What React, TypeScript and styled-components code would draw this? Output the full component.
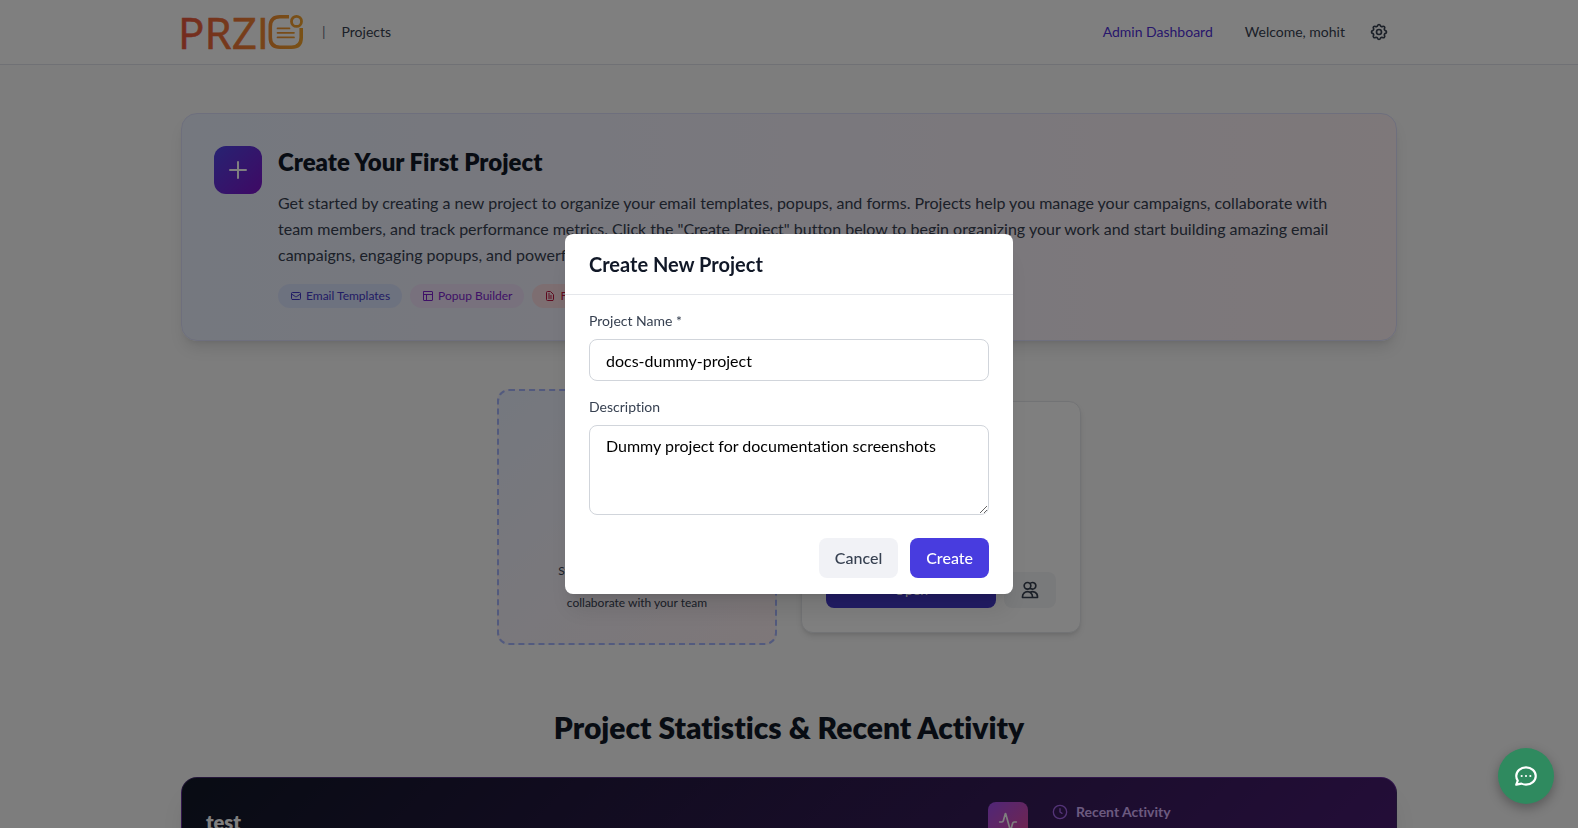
import React, { useState } from "react";
import styled, { createGlobalStyle, css } from "styled-components";

const GlobalStyle = createGlobalStyle`
  *, *::before, *::after { box-sizing: border-box; }
  body {
    margin: 0;
    overflow: hidden;
    background: #fafafa;
    color: #111827;
    font-family: Lato, "Liberation Sans", sans-serif;
    font-size: 16px;
    line-height: 24px;
    font-variant-ligatures: none;
    -webkit-font-smoothing: antialiased;
  }
  h1, h2, h3, p, ul { margin: 0; padding: 0; }
  button, input, textarea { font: inherit; }
  button { cursor: pointer; border: 0; }
  a { color: inherit; text-decoration: none; }
`;

/* ---------- icons ---------- */

const Svg = styled.svg<{ $size: number }>`
  display: block;
  flex: none;
  width: ${(p) => p.$size}px;
  height: ${(p) => p.$size}px;
  fill: none;
  stroke: currentColor;
  stroke-width: 2;
  stroke-linecap: round;
  stroke-linejoin: round;
`;

const paths = {
  gear: [
    "M10.325 4.317c.426-1.756 2.924-1.756 3.35 0a1.724 1.724 0 002.573 1.066c1.543-.94 3.31.826 2.37 2.37a1.724 1.724 0 001.065 2.572c1.756.426 1.756 2.924 0 3.35a1.724 1.724 0 00-1.066 2.573c.94 1.543-.826 3.31-2.37 2.37a1.724 1.724 0 00-2.572 1.065c-.426 1.756-2.924 1.756-3.35 0a1.724 1.724 0 00-2.573-1.066c-1.543.94-3.31-.826-2.37-2.37a1.724 1.724 0 00-1.065-2.572c-1.756-.426-1.756-2.924 0-3.35a1.724 1.724 0 001.066-2.573c-.94-1.543.826-3.31 2.37-2.37.996.608 2.296.07 2.572-1.065z",
    "M15 12a3 3 0 11-6 0 3 3 0 016 0z",
  ],
  plus: ["M12 4v16m8-8H4"],
  mail: [
    "M3 8l7.89 5.26a2 2 0 002.22 0L21 8M5 19h14a2 2 0 002-2V7a2 2 0 00-2-2H5a2 2 0 00-2 2v10a2 2 0 002 2z",
  ],
  layout: [
    "M4 3h16a1 1 0 011 1v16a1 1 0 01-1 1H4a1 1 0 01-1-1V4a1 1 0 011-1z",
    "M3 9h18M9 21V9",
  ],
  document: [
    "M9 12h6m-6 4h6m2 5H7a2 2 0 01-2-2V5a2 2 0 012-2h5.586a1 1 0 01.707.293l5.414 5.414a1 1 0 01.293.707V19a2 2 0 01-2 2z",
    "M9 8h2",
  ],
  users: [
    "M12 4.354a4 4 0 110 5.292M15 21H3v-1a6 6 0 0112 0v1zm0 0h6v-1a6 6 0 00-9-5.197M13 7a4 4 0 11-8 0 4 4 0 018 0z",
  ],
  pulse: [
    "M22 12h-2.48a2 2 0 0 0-1.93 1.46l-2.35 8.36a.25.25 0 0 1-.48 0L9.24 2.18a.25.25 0 0 0-.48 0l-2.35 8.36A2 2 0 0 1 4.49 12H2",
  ],
  clock: ["M12 7v5l3 2M22 12a10 10 0 11-20 0 10 10 0 0120 0z"],
  chat: [
    "M8 12h.01M12 12h.01M16 12h.01M21 12c0 4.418-4.03 8-9 8a9.863 9.863 0 01-4.255-.949L3 20l1.395-3.72C3.512 15.042 3 13.574 3 12c0-4.418 4.03-8 9-8s9 3.582 9 8z",
  ],
};

function Icon({ name, size }: { name: keyof typeof paths; size: number }) {
  return (
    <Svg $size={size} viewBox="0 0 24 24" aria-hidden="true">
      {paths[name].map((d) => (
        <path key={d} d={d} />
      ))}
    </Svg>
  );
}

const LogoSvg = styled.svg`
  display: block;
  overflow: visible;
  width: 124px;
  height: 40px;
  font-family: "Open Sans", sans-serif;
  font-size: 44px;
`;

function Logo() {
  return (
    <LogoSvg viewBox="0 0 124 40" role="img" aria-label="PRZIO">
      <defs>
        <linearGradient id="logoFill" gradientUnits="userSpaceOnUse" x1="0" y1="0" x2="124" y2="0">
          <stop offset="0" stopColor="#e8573f" />
          <stop offset="0.5" stopColor="#ee7a35" />
          <stop offset="1" stopColor="#f3a52c" />
        </linearGradient>
      </defs>
      <text x="-3" y="37" fill="url(#logoFill)" stroke="url(#logoFill)" strokeWidth="0.6">
        PRZI
      </text>
      <g fill="none" stroke="url(#logoFill)" strokeLinecap="round">
        <path
          strokeWidth="3.6"
          strokeLinecap="butt"
          d="M108 4.8H99Q89.300 4.800 89.300 14.500V25.500Q89.300 35.200 99 35.200H110.500Q120.200 35.200 120.200 25.500V16"
        />
        <circle cx="115.500" cy="9.400" r="5" strokeWidth="2.800" />
        <path strokeWidth="1.700" d="M96.500 16.400h12M96.500 20.800h16.500M96.500 25.400h16.500" />
      </g>
    </LogoSvg>
  );
}

/* ---------- page ---------- */

const Page = styled.div`
  height: 100vh;
  overflow: hidden;
`;

const Container = styled.div`
  width: 100%;
  max-width: 1280px;
  margin: 0 auto;
  padding: 0 32px;
`;

const Header = styled.header`
  background: #fff;
  border-bottom: 1px solid #e0e2ea;
`;

const HeaderRow = styled(Container)`
  display: flex;
  align-items: center;
  justify-content: space-between;
  height: 64px;
  font-size: 14px;
  line-height: 20px;
`;

const Brand = styled.div`
  display: flex;
  align-items: center;
  gap: 16px;
  color: #374151;
`;

const Divider = styled.span`
  color: #6b7280;
  margin-left: 1px;
`;

const Account = styled.nav`
  display: flex;
  align-items: center;
  gap: 16px;
  color: #374151;
`;

const AdminLink = styled.a`
  color: #4f2fd8;
  margin-right: 16px;
`;

const IconButton = styled.button`
  padding: 8px;
  background: transparent;
  color: #374151;
`;

const Main = styled(Container).attrs({ as: "main" })`
  padding-top: 48px;
`;

const Hero = styled.section`
  display: flex;
  gap: 16px;
  padding: 32px;
  border: 1px solid #dcdffb;
  border-radius: 16px;
  background: linear-gradient(to right, #eaf0fe, #f4f0fb 50%, #fcf0f4);
  box-shadow: 0 10px 15px -3px rgba(0, 0, 0, 0.1), 0 4px 6px -4px rgba(0, 0, 0, 0.1);
`;

const Tile = styled.div<{ $size: number; $from: string; $to: string; $radius: number }>`
  display: grid;
  place-items: center;
  flex: none;
  width: ${(p) => p.$size}px;
  height: ${(p) => p.$size}px;
  border-radius: ${(p) => p.$radius}px;
  background: linear-gradient(135deg, ${(p) => p.$from}, ${(p) => p.$to});
  color: #fff;
`;

const HeroTitle = styled.h1`
  font-size: 24px;
  line-height: 32px;
  font-weight: 800;
`;

const HeroText = styled.p`
  margin-top: 12px;
  line-height: 26px;
  color: #374151;
`;

const Chips = styled.ul`
  display: flex;
  flex-wrap: wrap;
  gap: 8px;
  margin-top: 16px;
  list-style: none;
`;

const Chip = styled.li<{ $bg: string; $fg: string }>`
  display: flex;
  align-items: center;
  gap: 4px;
  padding: 4px 12px;
  border-radius: 12px;
  background: ${(p) => p.$bg};
  color: ${(p) => p.$fg};
  font-size: 12px;
  line-height: 16px;
`;

const Cards = styled.section`
  display: flex;
  flex-wrap: wrap;
  align-items: center;
  justify-content: center;
  gap: 24px;
  margin: 48px 0 64px;
`;

const NewCard = styled.div`
  display: flex;
  flex-direction: column;
  align-items: center;
  justify-content: flex-end;
  width: 280px;
  min-height: 256px;
  padding: 32px;
  border: 2px dashed #a5b4fc;
  border-radius: 12px;
  background: linear-gradient(135deg, #eaf0fe, #f4f0f8 50%, #fceff2);
  color: #374151;
  font-size: 12px;
  line-height: 16px;
  text-align: center;
`;

const ProjectCard = styled.article`
  display: flex;
  align-items: flex-end;
  gap: 8px;
  width: 280px;
  min-height: 232px;
  padding: 24px;
  border: 1px solid #e5e7eb;
  border-radius: 12px;
  background: #fff;
  box-shadow: 0 4px 6px -1px rgba(0, 0, 0, 0.1), 0 2px 4px -2px rgba(0, 0, 0, 0.1);
`;

const cardButton = css`
  height: 36px;
  border-radius: 8px;
  font-size: 14px;
  line-height: 20px;
`;

const OpenButton = styled.button`
  ${cardButton}
  flex: 1;
  padding: 8px 16px;
  background: #4338ca;
  color: #fff;
`;

const TeamButton = styled.button`
  ${cardButton}
  padding: 8px 16px;
  background: #f3f4f6;
  color: #374151;
`;

const SectionTitle = styled.h2`
  margin-bottom: 32px;
  font-size: 30px;
  line-height: 36px;
  font-weight: 800;
  text-align: center;
`;

const Stats = styled.section`
  display: flex;
  gap: 24px;
  min-height: 300px;
  padding: 24px;
  border: 1px solid rgba(168, 85, 247, 0.3);
  border-radius: 16px;
  background: linear-gradient(135deg, #111827, #581c87 110%);
  box-shadow: 0 20px 25px -5px rgba(0, 0, 0, 0.1), 0 8px 10px -6px rgba(0, 0, 0, 0.1);
`;

const StatsHead = styled.div`
  display: flex;
  align-items: center;
  justify-content: space-between;
  flex: 1;
  height: 40px;
  color: #fff;
`;

const StatsName = styled.h3`
  font-size: 20px;
  line-height: 28px;
  font-weight: 800;
`;

const Activity = styled.div`
  display: flex;
  align-items: center;
  gap: 8px;
  width: 320px;
  height: 20px;
  color: #a868f0;
`;

const ActivityTitle = styled.h3`
  font-size: 14px;
  line-height: 20px;
  font-weight: 700;
  color: #d8b4fe;
`;

/* ---------- dialog ---------- */

const Overlay = styled.div`
  position: fixed;
  inset: 0;
  z-index: 10;
  display: flex;
  align-items: center;
  justify-content: center;
  padding: 16px;
  background: rgba(0, 0, 0, 0.5);
`;

const Dialog = styled.div`
  width: 100%;
  max-width: 448px;
  border-radius: 8px;
  background: #fff;
  box-shadow: 0 20px 25px -5px rgba(0, 0, 0, 0.1), 0 8px 10px -6px rgba(0, 0, 0, 0.1);
`;

const DialogTitle = styled.h2`
  padding: 16px 24px;
  border-bottom: 1px solid #e5e7eb;
  font-size: 20px;
  line-height: 28px;
  font-weight: 700;
`;

const Form = styled.form`
  display: flex;
  flex-direction: column;
  padding: 16px 24px;
`;

const Label = styled.label`
  margin-bottom: 8px;
  font-size: 14px;
  line-height: 20px;
  color: #374151;
`;

const field = css`
  display: block;
  width: 100%;
  padding: 8px 16px;
  border: 1px solid #d1d5db;
  border-radius: 8px;
  background: #fff;
  color: #000;
  line-height: 24px;
  outline: none;
`;

const TextInput = styled.input`
  ${field}
  height: 42px;
  margin-bottom: 16px;
`;

const TextArea = styled.textarea`
  ${field}
  height: 90px;
  margin-bottom: 23px;
  resize: vertical;
`;

const Actions = styled.div`
  display: flex;
  justify-content: flex-end;
  gap: 12px;
`;

const ActionButton = styled.button<{ $primary?: boolean }>`
  padding: 8px 16px;
  border-radius: 8px;
  background: ${(p) => (p.$primary ? "#483cdf" : "#f1f2f6")};
  color: ${(p) => (p.$primary ? "#fff" : "#374151")};
  font-weight: 500;
`;

const ChatButton = styled.button`
  position: fixed;
  right: 24px;
  bottom: 24px;
  z-index: 20;
  display: grid;
  place-items: center;
  width: 56px;
  height: 56px;
  padding: 0;
  border-radius: 50%;
  background: #2f8a5f;
  color: #fff;
  box-shadow: 0 4px 12px rgba(0, 0, 0, 0.3);
`;

export default function App() {
  const [name, setName] = useState("docs-dummy-project");
  const [description, setDescription] = useState("Dummy project for documentation screenshots");

  return (
    <>
      <GlobalStyle />
      <Page>
        <Header>
          <HeaderRow>
            <Brand>
              <Logo />
              <Divider>|</Divider>
              <a href="#projects">Projects</a>
            </Brand>
            <Account>
              <AdminLink href="#admin">Admin Dashboard</AdminLink>
              <span>Welcome, mohit</span>
              <IconButton type="button" aria-label="Settings">
                <Icon name="gear" size={20} />
              </IconButton>
            </Account>
          </HeaderRow>
        </Header>

        <Main>
          <Hero>
            <Tile $size={48} $radius={12} $from="#4f46e5" $to="#7e12c9">
              <Icon name="plus" size={24} />
            </Tile>
            <div>
              <HeroTitle>Create Your First Project</HeroTitle>
              <HeroText>
                Get started by creating a new project to organize your email templates, popups, and forms. Projects help
                you manage your campaigns, collaborate with team members, and track performance metrics. Click the
                "Create Project" button below to begin organizing your work and start building amazing email campaigns,
                engaging popups, and powerful forms.
              </HeroText>
              <Chips>
                <Chip $bg="#dbe4ff" $fg="#4338ca">
                  <Icon name="mail" size={12} />
                  Email Templates
                </Chip>
                <Chip $bg="#f0e2fa" $fg="#7e22ce">
                  <Icon name="layout" size={12} />
                  Popup Builder
                </Chip>
                <Chip $bg="#fbdce2" $fg="#be123c">
                  <Icon name="document" size={12} />
                  Forms
                </Chip>
              </Chips>
            </div>
          </Hero>

          <Cards id="projects">
            <NewCard>
              <p>
                Start a new project to manage
                <br />
                campaigns and
                <br />
                collaborate with your team
              </p>
            </NewCard>
            <ProjectCard>
              <OpenButton type="button">Open</OpenButton>
              <TeamButton type="button" aria-label="Team">
                <Icon name="users" size={20} />
              </TeamButton>
            </ProjectCard>
          </Cards>

          <SectionTitle>Project Statistics &amp; Recent Activity</SectionTitle>

          <Stats>
            <StatsHead>
              <StatsName>test</StatsName>
              <Tile $size={40} $radius={8} $from="#a04df0" $to="#e84a94">
                <Icon name="pulse" size={20} />
              </Tile>
            </StatsHead>
            <Activity>
              <Icon name="clock" size={16} />
              <ActivityTitle>Recent Activity</ActivityTitle>
            </Activity>
          </Stats>
        </Main>
      </Page>

      <Overlay>
        <Dialog role="dialog" aria-modal="true" aria-labelledby="dialog-title">
          <DialogTitle id="dialog-title">Create New Project</DialogTitle>
          <Form onSubmit={(e) => e.preventDefault()}>
            <Label htmlFor="project-name">Project Name *</Label>
            <TextInput id="project-name" type="text" value={name} onChange={(e) => setName(e.target.value)} />
            <Label htmlFor="project-description">Description</Label>
            <TextArea
              id="project-description"
              rows={3}
              value={description}
              onChange={(e) => setDescription(e.target.value)}
            />
            <Actions>
              <ActionButton type="button">Cancel</ActionButton>
              <ActionButton type="submit" $primary>
                Create
              </ActionButton>
            </Actions>
          </Form>
        </Dialog>
      </Overlay>

      <ChatButton type="button" aria-label="Open chat">
        <Icon name="chat" size={26} />
      </ChatButton>
    </>
  );
}
